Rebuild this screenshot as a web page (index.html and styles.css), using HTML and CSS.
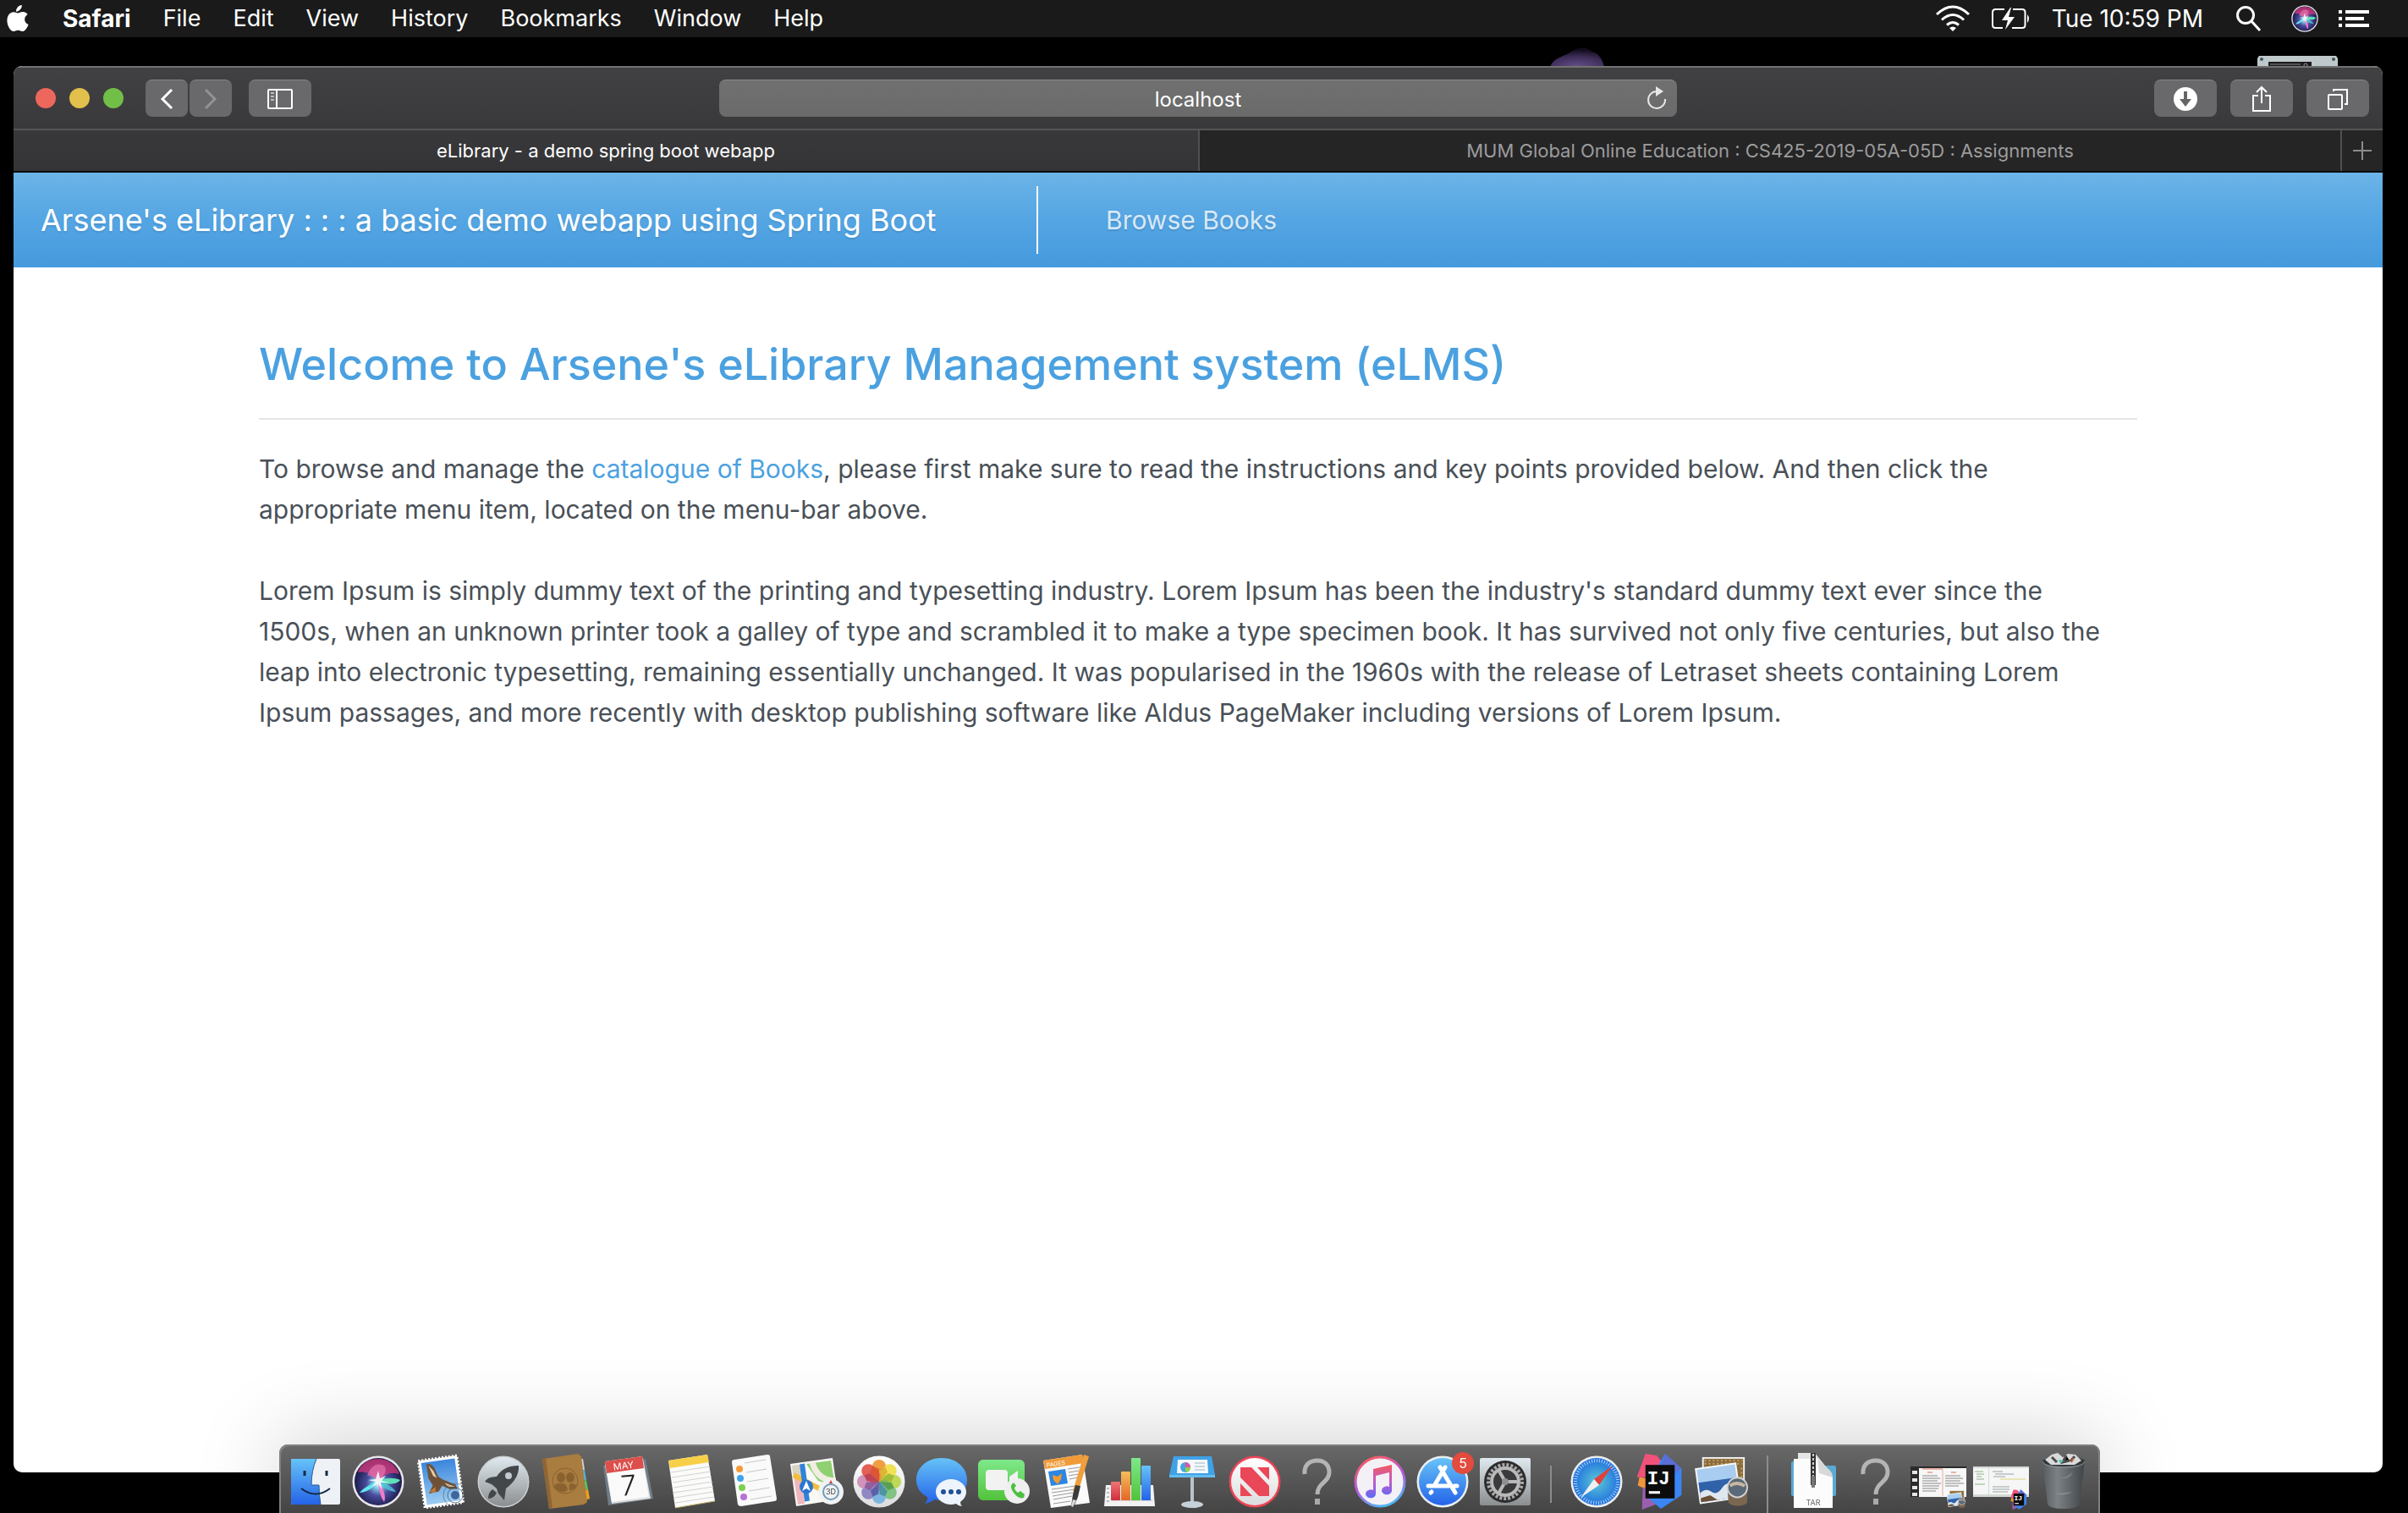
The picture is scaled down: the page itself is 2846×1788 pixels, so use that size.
FILE: index.html
```html
<!DOCTYPE html>
<html lang="en">
<head>
<meta charset="utf-8">
<meta name="viewport" content="width=device-width, initial-scale=1">
<title>eLibrary - a demo spring boot webapp</title>
<link rel="stylesheet" href="styles.css">
</head>
<body>
<svg class="defs" width="0" height="0" aria-hidden="true">
  <defs>
    <linearGradient id="g-silver" x2="0" y2="1"><stop offset="0" stop-color="#dfe9ef"/><stop offset="1" stop-color="#8b8e90"/></linearGradient>
    <linearGradient id="g-white" x2="0" y2="1"><stop offset="0" stop-color="#ffffff"/><stop offset="1" stop-color="#dcdcde"/></linearGradient>
    <linearGradient id="g-blue" x2="0" y2="1"><stop offset="0" stop-color="#66c3f8"/><stop offset="1" stop-color="#2563e8"/></linearGradient>
    <linearGradient id="g-green" x2="0" y2="1"><stop offset="0" stop-color="#7ee98a"/><stop offset="1" stop-color="#52c23c"/></linearGradient>
    <linearGradient id="g-red" x2="0" y2="1"><stop offset="0" stop-color="#ee7575"/><stop offset="1" stop-color="#cf2f3d"/></linearGradient>
    <linearGradient id="g-orange" x2="0" y2="1"><stop offset="0" stop-color="#f4bd5a"/><stop offset="1" stop-color="#e5662b"/></linearGradient>
    <linearGradient id="g-sky" x2="0" y2="1"><stop offset="0" stop-color="#3a86dd"/><stop offset="1" stop-color="#9ecdf0"/></linearGradient>
    <linearGradient id="g-note" x2="0" y2="1"><stop offset="0" stop-color="#f25a5c"/><stop offset=".5" stop-color="#c25acb"/><stop offset="1" stop-color="#5a6df8"/></linearGradient>
    <linearGradient id="g-ring" x1="0.3" x2="0.7" y2="1"><stop offset="0" stop-color="#f75c63"/><stop offset=".5" stop-color="#b35ae0"/><stop offset="1" stop-color="#48bdf5"/></linearGradient>
    <linearGradient id="g-trash"><stop offset="0" stop-color="#565c60"/><stop offset=".35" stop-color="#7b8185"/><stop offset="1" stop-color="#3f4448"/></linearGradient>
    <radialGradient id="g-siri" cy=".55"><stop offset="0" stop-color="#e9fbff"/><stop offset=".2" stop-color="#79c8e4"/><stop offset=".5" stop-color="#4a4c9c"/><stop offset="1" stop-color="#1b1c4c"/></radialGradient>
    <radialGradient id="g-compass"><stop offset="0" stop-color="#5cc9d4"/><stop offset="1" stop-color="#1f6fe0"/></radialGradient>
    <radialGradient id="g-moon" cy="1" r=".9"><stop offset="0" stop-color="#66508a"/><stop offset=".6" stop-color="#3d2d58"/><stop offset="1" stop-color="#120c1c"/></radialGradient>
    <symbol id="siri" viewBox="0 0 62 62">
      <circle cx="31" cy="31" r="30.500" fill="#e8e6ea"/>
      <circle cx="31" cy="31" r="28" fill="url(#g-siri)"/>
      <path d="M7 20C12 6 26 2 38 5c9 2 15 9 18 17-10-3-17 0-25 8C24 22 16 18 7 20z" fill="#d93a7d" opacity=".75"/>
      <path d="M18 24C22 12 30 8 38 12c4 5 1 12-7 18-4-4-8-6-13-6z" fill="#ef7db4" opacity=".6"/>
      <path d="M31 30C22 34 14 38 9 44c7 0 16-5 22-14z" fill="#63e6ee"/>
      <path d="M31 30c10-4 18-4 26-1-4 6-17 6-26 1z" fill="#5fe0b8"/>
      <path d="M31 30c9 2 17 7 21 13-8 0-16-5-21-13z" fill="#4fc7d6" opacity=".8"/>
      <path d="M30 30c2 9 3 18 8 25 3-6-1-18-8-25z" fill="#f27bc8"/>
      <path d="M31 18l2 9 7-3-5 6 9 2-10 0 1 8-5-7-7 5 5-7-9-2 9-1z" fill="#fff" opacity=".85"/>
    </symbol>
    <symbol id="intellij" viewBox="0 0 56 66">
      <path d="M11 1l13 2 10 12-4 14-29-1z" fill="#f2517a"/>
      <path d="M4 28l10 2 2 14-14-6z" fill="#f0953c"/>
      <path d="M8 40l14 4 6 14-21 8z" fill="#9a5fb0"/>
      <path d="M34 1l19 17v31l-24 16-14-12 8-34z" fill="#3a86f5"/>
      <path d="M34 1l19 17-20 16-6-12z" fill="#5a6ed6"/>
      <rect x="11" y="14" width="34" height="39" fill="#0c0c0c"/>
      <text x="13" y="36" class="icon-ij">IJ</text>
      <path d="M15 46h13" stroke="#fff" stroke-width="3"/>
    </symbol>
    <symbol id="photo-stack" viewBox="0 0 66 64">
      <rect x="10" y="2" width="50" height="42" fill="#8a6b3a" stroke="#f1f1f1" stroke-width="2"/>
      <path d="M12 5h46M12 9h46M57 14v26" stroke="#c8a469" stroke-width="2" stroke-dasharray="2 3"/>
      <g transform="rotate(-8 28 34)">
        <rect x="3" y="11" width="51" height="44" fill="#f6f6f6"/>
        <rect x="5" y="13" width="47" height="40" fill="#a9cdf0"/>
        <rect x="5" y="29" width="47" height="24" fill="#2f62a8"/>
        <path d="M5 42q8-6 14 0t14-3 19 2v12H5z" fill="#dfe8ee"/>
        <path d="M5 48l12-2 8 7H5z" fill="#6b5138"/>
      </g>
      <path d="M40 40h24v16c-3 6-20 6-23 0z" fill="#7b6650"/>
      <circle cx="52" cy="38" r="12" fill="#5b6a78" stroke="#d4d4d4" stroke-width="2"/>
      <path d="M43 36q8-6 18 0" stroke="#c9b79f" stroke-width="4" fill="none"/>
    </symbol>
    <symbol id="missing" viewBox="0 0 74 78">
      <path d="M22 35c-1-11 6-16 15-16s14 6 14 14c0 12-14 12-14 26" fill="none" stroke="#b4b4b4" stroke-width="5"/>
      <rect x="34" y="64" width="6" height="7" fill="#a8a8a8"/>
    </symbol>
  </defs>
</svg>

<header class="menubar">
  <nav class="menubar-menus" aria-label="Application menu">
    <button class="menu-logo" aria-label="Apple"><svg width="26" height="34" viewBox="0 0 26 34"><path d="M17.800 1c.3 4-3 7.600-6.700 7.700C10.700 4.800 14 1.300 17.800 1zM13 10.400c1.500 0 3.300-1.600 6-1.500 2.400.1 4.400 1.200 5.600 3-5.200 3.300-4.200 10 1 12-1.200 3.500-4 8.100-7 8.100-2 0-2.900-1.300-5.300-1.300S9.900 32 8 32C4.500 32 .4 25.500.4 19.200c0-6.400 4-9.900 7.500-9.900 2.300 0 4 1.100 5.100 1.100z" fill="#fff"/></svg></button>
    <button class="menu-item menu-app">Safari</button>
    <button class="menu-item">File</button>
    <button class="menu-item">Edit</button>
    <button class="menu-item">View</button>
    <button class="menu-item">History</button>
    <button class="menu-item">Bookmarks</button>
    <button class="menu-item">Window</button>
    <button class="menu-item">Help</button>
  </nav>
  <div class="menubar-status">
    <svg width="42" height="32" viewBox="0 0 42 32" fill="none" stroke="#fff" stroke-width="3" role="img" aria-label="Wi-Fi"><path d="M2 11Q21-7 40 11M8 17.500q13-12 26 0M14 23.500q7-6 14 0"/><path d="M17 27q4-3 8 0l-4 4z" fill="#fff" stroke="none"/></svg>
    <svg width="48" height="28" viewBox="0 0 48 28" role="img" aria-label="Battery charging"><path d="M16 3H5.500Q2 3 2 6.500v15Q2 25 5.500 25H14M26 3h11q3.500 0 3.500 3.500v15Q40.500 25 37 25H25" fill="none" stroke="#fff" stroke-width="2"/><path d="M23 1L13 16h7l-3 11 11-15h-7l3-11z" fill="#fff"/><path d="M43 9q4 5 0 10z" fill="#fff"/></svg>
    <time class="clock">Tue 10:59 PM</time>
    <button class="status-button" aria-label="Search"><svg width="30" height="30" viewBox="0 0 30 30" fill="none" stroke="#fff" stroke-width="3"><circle cx="11" cy="11" r="9.500"/><path d="M18 18l10 11"/></svg></button>
    <button class="status-button" aria-label="Siri"><svg width="32" height="32"><use href="#siri"/></svg></button>
    <button class="status-button" aria-label="Notification center"><svg width="36" height="22" viewBox="0 0 36 22" fill="#fff"><path d="M0 1h4v4H0zM8 1h28v4H8zM0 9h4v4H0zM8 9h22v4H8zM0 17h4v4H0zM8 17h28v4H8z"/></svg></button>
  </div>
</header>

<svg class="wallpaper-moon" width="64" height="24" viewBox="0 0 64 24" aria-hidden="true"><path d="M0 24C4 14 14 12 22 8 30 1 42-1 50 6c8 2 12 10 14 18z" fill="url(#g-moon)"/></svg>
<svg class="wallpaper-drive" width="95" height="14" viewBox="0 0 95 14" aria-hidden="true"><path d="M2 0h91l2 3v11H0V3z" fill="#bfc9cc"/><path d="M13 7h51v7H13z" fill="#1c1c1c"/><path d="M15 10h36" stroke="#888"/><circle cx="57" cy="11" r="2" fill="none" stroke="#999"/><circle cx="5" cy="4" r="2" fill="#41545e"/><circle cx="90" cy="4" r="2" fill="#41545e"/></svg>

<main class="window">
  <div class="toolbar">
    <div class="toolbar-left">
      <div class="lights">
        <button class="light light-close" aria-label="Close"></button>
        <button class="light light-min" aria-label="Minimize"></button>
        <button class="light light-zoom" aria-label="Zoom"></button>
      </div>
      <div class="history">
        <button class="tool tool-narrow" aria-label="Back"><svg width="16" height="26" viewBox="0 0 16 26" fill="none" stroke="#fff" stroke-width="3"><path d="M14 2L3 13l11 11"/></svg></button>
        <button class="tool tool-narrow" aria-label="Forward" disabled><svg width="16" height="26" viewBox="0 0 16 26" fill="none" stroke="#939395" stroke-width="3"><path d="M2 2l11 11L2 24"/></svg></button>
      </div>
      <button class="tool" aria-label="Sidebar"><svg width="30" height="24" viewBox="0 0 30 24" fill="none" stroke="#fff" stroke-width="2"><rect x="1" y="1" width="28" height="22" rx="1"/><path d="M11 1v22"/><path d="M4 5h4M4 9h4M4 13h4" stroke="#bbb"/></svg></button>
    </div>
    <form class="address">
      <input class="address-input" type="text" value="localhost" aria-label="Address">
      <button class="reload" type="button" aria-label="Reload"><svg width="24" height="28" viewBox="0 0 24 28"><path d="M12 6A10 10 0 1 0 22 15" fill="none" stroke="#e6e6e6" stroke-width="2"/><path d="M11 0l9 6-9 6z" fill="#e6e6e6"/></svg></button>
    </form>
    <div class="toolbar-right">
      <button class="tool" aria-label="Downloads"><svg width="28" height="30" viewBox="0 0 28 30"><ellipse cx="14" cy="15" rx="14" ry="14" fill="#fff"/><path d="M12 6h4v9h5l-7 9-7-9h5z" fill="#666"/></svg></button>
      <button class="tool" aria-label="Share"><svg width="24" height="32" viewBox="0 0 24 32" fill="none" stroke="#fff" stroke-width="2"><path d="M8 12H2v18h20V12h-6M12 21V2M6 8l6-6 6 6"/></svg></button>
      <button class="tool" aria-label="Show all tabs"><svg width="24" height="26" viewBox="0 0 24 26" fill="none" stroke="#fff" stroke-width="2"><rect x="1" y="8" width="16" height="17" rx="1"/><path d="M7 4V2h16v17h-3"/></svg></button>
    </div>
  </div>
  <div class="tabs">
    <button class="tab tab-active">eLibrary - a demo spring boot webapp</button>
    <button class="tab">MUM Global Online Education : CS425-2019-05A-05D : Assignments</button>
    <button class="tab" aria-label="New tab"><svg width="22" height="22" viewBox="0 0 22 22" stroke="#8c8c8c" stroke-width="2"><path d="M11 0v22M0 11h22"/></svg></button>
  </div>

  <div class="page">
    <nav class="navbar">
      <a class="brand" href="#">Arsene's eLibrary : : : a basic demo webapp using Spring Boot</a>
      <a class="nav-link" href="#">Browse Books</a>
    </nav>
    <article class="content">
      <h1 class="title">Welcome to Arsene's eLibrary Management system (eLMS)</h1>
      <hr class="rule">
      <p class="text">To browse and manage the <a class="link" href="#">catalogue of Books</a>, please first make sure to read the instructions and key points provided below. And then click the appropriate menu item, located on the menu-bar above.</p>
      <p class="text">Lorem Ipsum is simply dummy text of the printing and typesetting industry. Lorem Ipsum has been the industry's standard dummy text ever since the 1500s, when an unknown printer took a galley of type and scrambled it to make a type specimen book. It has survived not only five centuries, but also the leap into electronic typesetting, remaining essentially unchanged. It was popularised in the 1960s with the release of Letraset sheets containing Lorem Ipsum passages, and more recently with desktop publishing software like Aldus PageMaker including versions of Lorem Ipsum.</p>
    </article>
  </div>
</main>

<footer class="dock-area">
  <nav class="dock" aria-label="Dock">
    <button class="app" aria-label="Finder"><svg viewBox="0 0 74 78"><rect x="8" y="17" width="58" height="54" rx="2" fill="#eef1f6"/><path d="M10 17h28q-6 14-6 31h9q0 12 2 23H10q-2 0-2-2V19q0-2 2-2z" fill="url(#g-blue)"/><path d="M38 17q-6 14-6 31h9q0 12 2 23" fill="none" stroke="#2a5a8c" stroke-width="1"/><path d="M24 31v6M50 31v6" stroke="#132a44" stroke-width="3"/><path d="M20 52q17 13 34 0" fill="none" stroke="#132a44" stroke-width="2"/></svg></button>
    <button class="app" aria-label="Siri"><svg viewBox="0 0 74 78"><use href="#siri" x="6" y="13" width="62" height="62"/></svg></button>
    <button class="app" aria-label="Mail"><svg viewBox="0 0 74 78"><g transform="rotate(-8 37 44)"><rect x="14" y="16" width="46" height="56" fill="#fff" stroke="#fff" stroke-width="3" stroke-dasharray="2 2"/><rect x="17" y="19" width="40" height="50" fill="url(#g-sky)"/><path d="M23 21q7 0 9 7l3 10 5 4 14 8 1 5-9-1-8-5-5 6-12 1 6-9-4-9z" fill="#6e5238"/><path d="M25 23l5 7 3 9-4-3zM41 46l12 6-8-1z" fill="#e2cfb0"/><path d="M22 54l8-5-1 7z" fill="#c07a38"/></g><g fill="none" stroke="#3c4a5e"><circle cx="54" cy="60" r="14" opacity=".5"/><circle cx="54" cy="60" r="9" opacity=".7"/></g><circle cx="54" cy="60" r="5" fill="#2c4f86" opacity=".8"/></svg></button>
    <button class="app" aria-label="Launchpad"><svg viewBox="0 0 74 78"><circle cx="37" cy="44" r="30.500" fill="#c9ced1"/><circle cx="37" cy="44" r="29" fill="url(#g-silver)"/><g fill="#43474a"><path d="M55 25q1 15-15 27l-2 14-7-8-2-6-6-5-8-3q3-6 14-6 8-13 26-13z"/><path d="M24 53l5 4q-3 7-10 7 0-7 5-11z"/></g><circle cx="43" cy="37" r="4" fill="#c2cacf"/></svg></button>
    <button class="app" aria-label="Contacts"><svg viewBox="0 0 74 78"><path d="M52 17l5 0 2 13h-6z" fill="#d4d4d4"/><path d="M55 31l4-1 2 12h-5z" fill="#53b4dc"/><path d="M57 43l4-1 2 11h-5z" fill="#51c95a"/><path d="M58 54l5-1 2 11-6 2z" fill="#f0a021"/><path d="M9 17l42-6 4 3 7 54-4 3-41 5z" fill="#a97c40"/><path d="M9 17l4-1 8 59-4 1z" fill="#8f6633"/><circle cx="36" cy="43" r="15" fill="none" stroke="#8a6230" stroke-width="1"/><g fill="#8a6230"><ellipse cx="31" cy="39" rx="5" ry="6"/><ellipse cx="42" cy="39" rx="5" ry="6"/><path d="M22 50q3-5 9-4 6-1 8 7-3 4-8 3-6-1-9-6zM41 54q-1-7 1-8 5 0 8 3-3 5-9 5z"/></g></svg></button>
    <button class="app" aria-label="Calendar"><svg viewBox="0 0 74 78"><path d="M7 25l50-8 9 47-53 8z" fill="#6e7e8a"/><path d="M9 24l45-7 9 47-46 6z" fill="#dcdcdc"/><path d="M9 20l44-6 8 48-44 6z" fill="#fafafa"/><path d="M9 20l44-6 2 14-44 6z" fill="#dc4f4b"/><text x="31" y="29" class="icon-month" transform="rotate(-7 32 26)">MAY</text><text x="37" y="60" class="icon-day" transform="rotate(-5 37 50)">7</text></svg></button>
    <button class="app" aria-label="Notes"><svg viewBox="0 0 74 78"><path d="M10 19l46-7 9 55-47 8z" fill="#fbfbf9"/><path d="M10 19l46-7 2 9-46 7z" fill="#f8cf48"/><path d="M13 33l46-7M14 39l46-7M15 45l46-7M16 51l46-7M16 57l47-7M17 63l46-7M18 69l46-7" stroke="#d2d2d2"/><path d="M18 75l47-8" stroke="#b8a860"/></svg></button>
    <button class="app" aria-label="Reminders"><svg viewBox="0 0 74 78"><path d="M14 18l39-6q3 0 3 2l8 50q0 3-3 3l-39 6q-3 0-4-2l-7-50q0-3 3-3z" fill="#fafafa"/><circle cx="20" cy="29" r="4" fill="#f79b37"/><circle cx="21" cy="40" r="4" fill="#3fa3f0"/><circle cx="23" cy="51" r="4" fill="#7bd04d"/><circle cx="25" cy="62" r="4" fill="#b971d8"/><path d="M26 22l25-4M28 33l24-4M29 44l25-4M31 55l25-4M33 65l25-4" stroke="#c8c8c8"/></svg></button>
    <button class="app" aria-label="Maps"><svg viewBox="0 0 74 78"><path d="M6 23l50-7 7 49-50 8z" fill="#f8f8f5"/><path d="M8 25l9-1 6 46-8 1z" fill="#efb7bd"/><path d="M8 25l10-1 2 13-10 1z" fill="#d8d4c4"/><path d="M25 23l29-4 5 30-20-6z" fill="#8fd070"/><path d="M10 36l30 16 20-4" fill="none" stroke="#f3bd3f" stroke-width="6"/><path d="M20 23l6 44" stroke="#3182d8" stroke-width="6"/><path d="M32 21q6 22 28 22" fill="none" stroke="#f1ede2" stroke-width="7"/><circle cx="25" cy="50" r="8" fill="#2a76d2"/><path d="M25 43l5 12-5-3-5 3z" fill="#fff"/><circle cx="54" cy="56" r="15" fill="#f1f2f3"/><circle cx="54" cy="56" r="9" fill="none" stroke="#6f9cba" stroke-width="2"/><path d="M54 42l2 4h-4z" fill="#d8403a"/><text x="54" y="59" class="icon-3d">3D</text></svg></button>
    <button class="app" aria-label="Photos"><svg viewBox="0 0 74 78"><circle cx="37" cy="44" r="30.500" fill="url(#g-white)"/><g opacity=".95"><rect x="29" y="18" width="16" height="26" rx="8" fill="#f09a38"/><rect x="29" y="18" width="16" height="26" rx="8" fill="#f1e04c" transform="rotate(45 37 44)"/><rect x="29" y="18" width="16" height="26" rx="8" fill="#bcd750" transform="rotate(90 37 44)"/><rect x="29" y="18" width="16" height="26" rx="8" fill="#7cc27b" transform="rotate(135 37 44)"/><rect x="29" y="18" width="16" height="26" rx="8" fill="#77b4e0" transform="rotate(180 37 44)"/><rect x="29" y="18" width="16" height="26" rx="8" fill="#8c83c4" transform="rotate(225 37 44)"/><rect x="29" y="18" width="16" height="26" rx="8" fill="#cf8fb8" transform="rotate(270 37 44)"/><rect x="29" y="18" width="16" height="26" rx="8" fill="#e4574c" transform="rotate(315 37 44)"/></g><g opacity=".75"><path d="M37 44l-6-14 6-6 6 6z" fill="#d9542a" transform="rotate(-22 37 44)"/><path d="M37 44l-5-14 5-5 5 5z" fill="#dba62a" transform="rotate(23 37 44)"/><path d="M37 44l-5-14 5-5 5 5z" fill="#98b32c" transform="rotate(68 37 44)"/><path d="M37 44l-5-14 5-5 5 5z" fill="#4f9440" transform="rotate(113 37 44)"/><path d="M37 44l-5-14 5-5 5 5z" fill="#3f8a8c" transform="rotate(158 37 44)"/><path d="M37 44l-5-14 5-5 5 5z" fill="#4a559e" transform="rotate(203 37 44)"/><path d="M37 44l-5-14 5-5 5 5z" fill="#7d4f96" transform="rotate(248 37 44)"/><path d="M37 44l-5-14 5-5 5 5z" fill="#b23a55" transform="rotate(293 37 44)"/></g></svg></button>
    <button class="app" aria-label="Messages"><svg viewBox="0 0 74 78"><path d="M37 16c17 0 30 11 30 26S54 66 37 66q-5 0-9-1-4 4-11 5 4-4 3-8C12 58 7 51 7 42 7 27 20 16 37 16z" fill="url(#g-blue)"/><path d="M48 41c10 0 18 7 18 15 0 5-3 9-7 12q0 3 2 5-4 0-7-3-3 1-6 1c-10 0-18-7-18-15s8-15 18-15z" fill="#eef4fb"/><g fill="#1f4f96"><circle cx="39" cy="56" r="3"/><circle cx="48" cy="56" r="3"/><circle cx="57" cy="56" r="3"/></g></svg></button>
    <button class="app" aria-label="FaceTime"><svg viewBox="0 0 74 78"><rect x="6" y="18" width="55" height="48" rx="6" fill="url(#g-green)"/><rect x="15" y="30" width="26" height="24" rx="4" fill="#f2f2f2"/><path d="M43 38l10-7v20l-10-5z" fill="#f2f2f2"/><circle cx="52" cy="55" r="15" fill="#efefef"/><path d="M46 47q-3 3 2 10 6 8 12 6l1-4-5-4-3 2q-4-3-4-6l2-2-3-4z" fill="#4cc040"/></svg></button>
    <button class="app" aria-label="Pages"><svg viewBox="0 0 74 78"><path d="M9 19l46-7 9 57-46 6z" fill="#fafafa"/><path d="M9 19l46-7 2 10-46 7z" fill="#f09a38"/><text x="13" y="27" class="icon-pages" transform="rotate(-8 13 27)">PAGES</text><path d="M15 32l20-3 3 17-20 3z" fill="#2c86e2"/><path d="M20 36l6 2 5-4-1 7-4 6-5-5z" fill="#f39a31"/><path d="M38 29l14-2M39 33l12-2M39 37l12-2M40 41l10-2M19 53l28-4M19 57l28-4M20 61l24-4M21 65l22-4M21 70l20-3" stroke="#9a9a9a"/><path d="M57 12l6 2-13 43-6-2z" fill="#ef9f3c"/><path d="M47 48l6 1-3 13-5 12-3-1 2-14z" fill="#3c3c3e"/><path d="M44 65l4 1-4 8-2-1z" fill="#d7dadd"/></svg></button>
    <button class="app" aria-label="Numbers"><svg viewBox="0 0 74 78"><path d="M9 48h56l2 25H7z" fill="#f2f2f2"/><path d="M10 52h3M10 57h3M10 62h3M10 67h3" stroke="#888"/><path d="M15 66h49" stroke="#bbb"/><rect x="15" y="44" width="11" height="22" rx="1" fill="url(#g-red)"/><rect x="27" y="32" width="11" height="34" rx="1" fill="url(#g-orange)"/><rect x="39" y="16" width="11" height="50" rx="1" fill="url(#g-green)"/><rect x="51" y="25" width="11" height="41" rx="1" fill="url(#g-blue)"/></svg></button>
    <button class="app" aria-label="Keynote"><svg viewBox="0 0 74 78"><path d="M35 38h4v33h-4z" fill="#b9c3cc"/><ellipse cx="37" cy="71" rx="13" ry="4" fill="#c5d2dc"/><path d="M15 14h45l4 22v3H10v-3z" fill="#3fa2e8"/><path d="M10 36h54v3H10z" fill="#63bdf0"/><path d="M20 18h35l1 16H19z" fill="#f5f8fa"/><circle cx="29" cy="27" r="6" fill="#43a6e4"/><path d="M29 27v-6a6 6 0 0 1 6 6z" fill="#e455a0"/><path d="M29 27h6a6 6 0 0 1-6 6z" fill="#8ed04c"/><path d="M40 22h12M40 26h12M40 30h12" stroke="#9bb4c4"/></svg></button>
    <button class="app" aria-label="News"><svg viewBox="0 0 74 78"><circle cx="37" cy="44" r="30.500" fill="#ee4455"/><circle cx="37" cy="44" r="28" fill="url(#g-white)"/><path d="M20 27h13l21 22v12H42L20 39zM40 27h14v15zM20 46l14 15H20z" fill="#ea4758"/></svg></button>
    <button class="app" aria-label="Missing application"><svg><use href="#missing"/></svg></button>
    <button class="app" aria-label="iTunes"><svg viewBox="0 0 74 78"><circle cx="37" cy="44" r="29" fill="#f4f1f6" stroke="url(#g-ring)" stroke-width="3"/><path d="M29 29l22-5v31a6 5 0 1 1-3-5V33l-16 4v22a6 5 0 1 1-3-5z" fill="url(#g-note)"/></svg></button>
    <button class="app app-badged" aria-label="App Store"><svg viewBox="0 0 74 78"><circle cx="37" cy="44" r="30.500" fill="#e9eef2"/><circle cx="37" cy="44" r="28" fill="url(#g-blue)"/><g stroke="#fff" stroke-width="5" stroke-linecap="round"><path d="M40 27L27 49M34 27l18 30M20 49h24M51 49h3M24 56l-1 1"/></g></svg><span class="badge">5</span></button>
    <button class="app" aria-label="System Preferences"><svg viewBox="0 0 74 78"><rect x="7" y="16" width="60" height="56" rx="2" fill="url(#g-silver)"/><circle cx="37" cy="44" r="25" fill="#2c2c2e"/><circle cx="37" cy="44" r="20" fill="none" stroke="#a8a8a8" stroke-width="4" stroke-dasharray="3 2"/><circle cx="37" cy="44" r="16" fill="#3a3a3c" stroke="#b9b9b9" stroke-width="4"/><path d="M37 44h16M37 44l-8-14M37 44l-8 14" stroke="#b9b9b9" stroke-width="4"/><circle cx="37" cy="44" r="4" fill="#8d8f92"/></svg></button>
    <span class="divider divider-short"></span>
    <button class="app" aria-label="Safari"><svg viewBox="0 0 74 78"><circle cx="37" cy="44" r="30.500" fill="#eceef0"/><circle cx="37" cy="44" r="28" fill="url(#g-compass)"/><circle cx="37" cy="44" r="25" fill="none" stroke="#d6ecfa" stroke-width="4" stroke-dasharray="1 2" opacity=".8"/><path d="M56 25L40 48l-6-7z" fill="#e2403a"/><path d="M18 63l16-22 6 7z" fill="#f0f0f0"/></svg></button>
    <button class="app" aria-label="IntelliJ IDEA"><svg viewBox="0 0 74 78"><use href="#intellij" x="5" y="10" width="66" height="67"/></svg></button>
    <button class="app" aria-label="Preview"><svg viewBox="0 0 74 78"><use href="#photo-stack" x="4" y="14" width="66" height="62"/></svg></button>
    <span class="divider divider-tall"></span>
    <button class="app" aria-label="TAR archive"><svg viewBox="0 0 74 78"><path d="M11 22q0-2 2-2h10l2 5h37q2 0 2 2v32q0 2-2 2H13q-2 0-2-2z" fill="#5aaad3"/><path d="M19 10h20l20 25v34H19z" fill="#e4e4e4"/><path d="M14 17h28l18 22v36H14z" fill="#fcfcfc"/><path d="M42 17l2 17 16 5q0-6-5-10z" fill="#d8d8d8"/><path d="M37 10v38" stroke="#333" stroke-width="6"/><path d="M37 11v26" stroke="#ccc" stroke-width="2" stroke-dasharray="3 2"/><rect x="35" y="37" width="4" height="14" fill="#777"/><text x="37" y="72" class="icon-tar">TAR</text></svg></button>
    <button class="app" aria-label="Missing document"><svg><use href="#missing"/></svg></button>
    <button class="app" aria-label="Minimized Preview window"><svg viewBox="0 0 74 78"><path d="M4 26h66v36H4z" fill="#f7f7f7"/><path d="M4 26h66v2H14v34H4z" fill="#2b2b2d"/><path d="M6 31h6v4H6zM6 40h6v4H6zM6 49h6v4H6zM6 57h6v4H6z" fill="#e6e6e6"/><path d="M18 29h24M24 33h6M52 33h6" stroke="#e0745c" stroke-width="1"/><path d="M42 29v32" stroke="#e6aaa0"/><path d="M18 37h18M18 40h21M18 43h18M18 46h22M18 49h20M18 52h19M18 55h16M45 37h18M45 40h21M45 43h18M45 46h22M45 49h16" stroke="#888"/><use href="#photo-stack" x="45" y="54" width="26" height="22"/></svg></button>
    <button class="app" aria-label="Minimized IntelliJ window"><svg viewBox="0 0 74 78"><path d="M4 26h66v36H4z" fill="#f5f6f5"/><path d="M4 26h66v2H4zM4 59h66v3H4zM22 28h1v31h-1z" fill="#d3dad6"/><path d="M6 32h10M8 35h9M8 38h6M8 41h9M6 47h12" stroke="#8fb58a"/><path d="M27 32h12M30 35h22M28 38h14M27 50h20M27 53h20M27 56h18" stroke="#9aa3a8"/><path d="M36 41h30" stroke="#dcd67c"/><use href="#intellij" x="45" y="53" width="26" height="24"/></svg></button>
    <button class="app" aria-label="Trash"><svg viewBox="0 0 74 78"><path d="M12 18h50l-6 53q-3 5-19 5t-19-5z" fill="url(#g-trash)"/><ellipse cx="37" cy="20" rx="25" ry="6" fill="#33383b"/><path d="M15 18l8-6 7-2 6 5 6-4 9 1 7 7-8 5H22z" fill="#d9dadb"/><path d="M23 15l6 6M40 13l-4 8 8-2M50 14l-5 6" stroke="#4c4c4e" stroke-width="3"/><path d="M31 18l6 1-4 4z" fill="#53c4b0"/><path d="M46 21l3-5" stroke="#c8663a" stroke-width="2"/><path d="M12 20q2 7 25 7t25-7" fill="none" stroke="#8d9498"/><path d="M32 40q10-1 16-8-3 10-16 8zM26 58q10 4 22-2" fill="#9aa0a3" opacity=".5"/></svg></button>
  </nav>
</footer>
</body>
</html>
```
FILE: styles.css
```css
*,
*::before,
*::after {
  box-sizing: border-box;
}

body {
  display: flex;
  flex-direction: column;
  min-height: 100vh;
  margin: 0;
  background: #000;
  color: #495057;
  font-family: Inter, "Liberation Sans", sans-serif;
}

button {
  padding: 0;
  border: 0;
  background: none;
  color: inherit;
  font: inherit;
}

svg {
  display: block;
}

.defs {
  position: absolute;
}

/* Menu bar */

.menubar {
  display: flex;
  justify-content: space-between;
  align-items: center;
  height: 44px;
  padding: 0 46px 0 8px;
  background: #1a1a1a;
  color: #fff;
  font-size: 27px;
  line-height: 34px;
}

.menubar-menus {
  display: flex;
  align-items: center;
  gap: 38px;
}

.menu-logo {
  margin-right: 2px;
}

.menu-app {
  font-size: 28px;
  font-weight: 700;
}

.menubar-status {
  display: flex;
  align-items: center;
  gap: 24px;
}

.clock {
  font-size: 28px;
}

.status-button:first-of-type {
  margin: 0 11px 0 15px;
}

/* Things on the desktop behind the window */

.wallpaper-moon,
.wallpaper-drive {
  position: absolute;
}

.wallpaper-moon {
  top: 55px;
  left: 1832px;
}

.wallpaper-drive {
  top: 66px;
  right: 83px;
}

/* Browser window */

.window {
  position: relative;
  display: flex;
  flex: 1;
  flex-direction: column;
  margin: 34px 30px 48px 16px;
  overflow: hidden;
  border-radius: 10px;
  background: #fff;
}

.toolbar {
  display: grid;
  grid-template-columns: 1fr minmax(0, 1132px) 1fr;
  align-items: center;
  height: 76px;
  padding: 0 16px 0 26px;
  border-top: 2px solid #727272;
  border-bottom: 2px solid #555;
  background: linear-gradient(#414143, #39393b);
}

.toolbar-left,
.toolbar-right,
.lights,
.history {
  display: flex;
  align-items: center;
}

.toolbar-left {
  gap: 20px;
}

.toolbar-right {
  justify-content: flex-end;
  gap: 16px;
}

.lights {
  gap: 16px;
  margin-right: 6px;
}

.light {
  width: 24px;
  height: 24px;
  border-radius: 50%;
}

.light-close {
  background: #ee675c;
}

.light-min {
  background: #e1c04c;
}

.light-zoom {
  background: #72bf47;
}

.history {
  gap: 2px;
}

.tool {
  display: flex;
  justify-content: center;
  align-items: center;
  width: 74px;
  height: 44px;
  border-top: 1px solid #858587;
  border-radius: 8px;
  background: #69696b;
}

.tool-narrow {
  width: 50px;
}

.address {
  position: relative;
  margin: 0 5px 0 -5px;
}

.address-input {
  display: block;
  width: 100%;
  height: 44px;
  padding: 2px 40px 0;
  border: 0;
  border-top: 1px solid #8a8a8a;
  border-radius: 8px;
  background: linear-gradient(#707070, #6a6a6a);
  color: #fff;
  font: 24px/32px Inter, "Liberation Sans", sans-serif;
  text-align: center;
}

.reload {
  position: absolute;
  top: 8px;
  right: 12px;
}

.tabs {
  display: grid;
  grid-template-columns: 28fr 27fr 50px;
  height: 50px;
  border-bottom: 2px solid #0c0c0c;
}

.tab {
  display: flex;
  justify-content: center;
  align-items: center;
  min-width: 0;
  border-left: 2px solid #505050;
  background: #252526;
  color: #9c9c9c;
  font-size: 22px;
  line-height: 28px;
  white-space: nowrap;
}

.tab-active {
  border-left: 0;
  background: linear-gradient(#39393b, #343436);
  color: #fff;
}

/* Web page */

.page {
  flex: 1;
}

.navbar {
  display: flex;
  align-items: center;
  height: 112px;
  padding: 0 32px;
  background: linear-gradient(#6bb4e7, #54a5e3 50%, #459add);
  text-shadow: 0 2px 2px rgba(0, 0, 0, 0.1);
}

.brand {
  flex: none;
  width: 1179px;
  border-right: 2px solid #fff;
  color: #fff;
  font-size: 36px;
  line-height: 80px;
  text-decoration: none;
}

.nav-link {
  padding: 0 80px;
  color: rgba(255, 255, 255, 0.8);
  font-size: 30px;
  line-height: 48px;
  text-decoration: none;
}

.content {
  max-width: 2220px;
  margin: 0 auto;
  padding: 82px 0;
}

.title {
  margin: 0;
  color: #4ba1e0;
  font-size: 52px;
  font-weight: 500;
  line-height: 66px;
}

.rule {
  height: 2px;
  margin: 30px 0 34px;
  border: 0;
  background: #e5e5e5;
}

.text {
  margin: 0 0 48px;
  padding-right: 20px;
  font-size: 30px;
  line-height: 48px;
}

.link {
  color: #4ba1e0;
  text-decoration: none;
}

/* Dock */

.dock-area {
  position: fixed;
  right: 50px;
  bottom: 0;
  left: 16px;
  display: flex;
  justify-content: center;
}

.dock {
  display: flex;
  height: 81px;
  padding: 0 6px;
  border-radius: 10px 10px 0 0;
  background: linear-gradient(#696969, #444);
  box-shadow: inset 2px 2px #808080, inset -2px 0 #808080, 0 0 100px rgba(0, 0, 0, 0.22);
}

.app {
  display: flex;
  flex: none;
  align-items: flex-start;
  width: 74px;
}

.app svg {
  width: 74px;
  height: 78px;
}

.app-badged {
  position: relative;
}

.badge {
  position: absolute;
  top: 9px;
  right: 0;
  width: 26px;
  height: 26px;
  border-radius: 50%;
  background: #e24b3d;
  color: #fff;
  font-size: 16px;
  line-height: 26px;
}

.divider {
  width: 2px;
  margin: 0 16px;
  background: #8c8c8c;
}

.divider-short {
  height: 44px;
  margin-top: 25px;
}

.divider-tall {
  margin-top: 13px;
}

.icon-ij {
  fill: #fff;
  font: 700 22px "Liberation Mono", monospace;
}

.icon-month,
.icon-day,
.icon-3d,
.icon-tar {
  text-anchor: middle;
}

.icon-month {
  fill: #fff;
  font-size: 11px;
}

.icon-day {
  fill: #222;
  font-size: 33px;
  font-weight: 300;
}

.icon-3d {
  fill: #444;
  font-size: 9px;
}

.icon-pages {
  fill: #fff;
  font-size: 7px;
}

.icon-tar {
  fill: #666;
  font-size: 9px;
}
```
